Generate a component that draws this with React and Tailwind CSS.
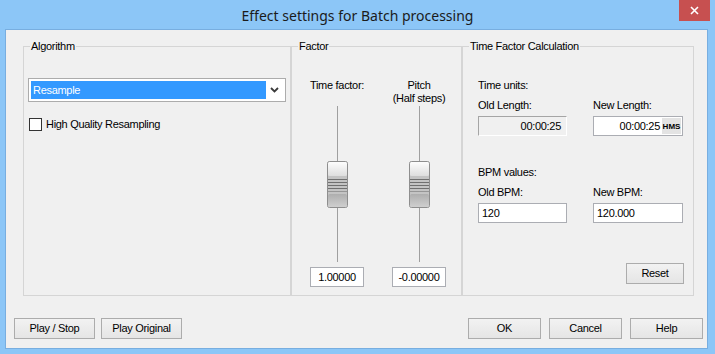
import React from "react";

function Btn({ children, className = "" }) {
  return (
    <div
      className={`h-[21px] border border-[#acacac] bg-linear-to-b from-[#f2f2f2] to-[#e5e5e5] flex items-center justify-center ${className}`}
    >
      {children}
    </div>
  );
}

function Thumb({ id }) {
  return (
    <svg width="21" height="47" viewBox="0 0 21 47" className="relative">
      <defs>
        <linearGradient id={`${id}t`} x1="0" y1="0" x2="0" y2="1">
          <stop offset="0" stopColor="#fdfdfd" />
          <stop offset="1" stopColor="#dedede" />
        </linearGradient>
        <linearGradient id={`${id}b`} x1="0" y1="0" x2="0" y2="1">
          <stop offset="0" stopColor="#aeaeae" />
          <stop offset="1" stopColor="#cfcfcf" />
        </linearGradient>
      </defs>
      <rect x="0.5" y="0.5" width="20" height="46" rx="2" fill="#c8c8c8" stroke="#8e8e8e" />
      <rect x="1" y="1" width="19" height="14" rx="1.5" fill={`url(#${id}t)`} />
      <rect x="1" y="15" width="19" height="18" fill="#c4c4c4" />
      <line x1="1" x2="20" y1="18.5" y2="18.5" stroke="#707070" />
      <line x1="1" x2="20" y1="21.5" y2="21.5" stroke="#707070" />
      <line x1="1" x2="20" y1="24.5" y2="24.5" stroke="#707070" />
      <line x1="1" x2="20" y1="27.5" y2="27.5" stroke="#707070" />
      <line x1="1" x2="20" y1="30.5" y2="30.5" stroke="#969696" />
      <rect x="1" y="33" width="19" height="13" rx="1.5" fill={`url(#${id}b)`} />
    </svg>
  );
}

function Slider({ label, value, id }) {
  return (
    <div className="flex flex-col items-center w-[54px]">
      <div className="h-[27px] leading-[13px] text-center whitespace-nowrap">{label}</div>
      <div className="relative w-[21px] h-[156px] flex items-center self-start ml-[17px]">
        <div className="absolute top-0 bottom-0 left-[10px] w-px bg-[#9f9f9f]" />
        <Thumb id={id} />
      </div>
      <div className="mt-[5px] w-[54px] h-[20px] border border-[#abadb3] bg-white text-center leading-[18px]">
        {value}
      </div>
    </div>
  );
}

function Group({ title, className = "", children }) {
  return (
    <fieldset className={`border border-[#d5d5d5] h-[256px] min-w-0 ${className}`}>
      <legend className="ml-[6px] px-[1px] leading-[13px]">{title}</legend>
      {children}
    </fieldset>
  );
}

export default function App() {
  return (
    <div className="w-[715px] h-[354px] bg-[#8cc6f7] flex flex-col font-['Liberation_Sans',Arial,sans-serif] text-[11px] text-black tracking-[-0.3px]">
      <div className="relative h-[29px] flex items-center justify-center pt-[2px]">
        <span className="font-['Noto_Sans',sans-serif] text-[14px] text-[#1b1b1b] tracking-normal">
          Effect settings for Batch processing
        </span>
        <div className="absolute top-0 right-[5px] w-[31px] h-[21px] bg-[#c75050] flex items-center justify-center">
          <svg width="9" height="9" viewBox="0 0 9 9">
            <path d="M1 1 L8 8 M8 1 L1 8" stroke="white" strokeWidth="1.6" />
          </svg>
        </div>
      </div>
      <div className="ml-[5px] w-[703px] h-[320px] border border-[#78aee0] bg-[#f0f0f0] flex flex-col">
        <div className="flex pl-[17px] pt-[10px]">
          <Group title="Algorithm" className="w-[268px]">
            <div className="pl-[4px] pt-[25px]">
              <div className="w-[258px] h-[24px] border border-[#acacac] bg-white flex items-center p-[2px]">
                <div className="flex-1 h-[18px] bg-[#3399ff] text-white pl-[2px] flex items-center">Resample</div>
                <div className="w-[17px] flex justify-center">
                  <svg width="9" height="6" viewBox="0 0 9 6">
                    <path d="M1 1 L4.5 4.5 L8 1" stroke="#3a3a3a" strokeWidth="1.8" fill="none" />
                  </svg>
                </div>
              </div>
              <div className="mt-[14px] ml-[1px] flex items-center">
                <div className="w-[13px] h-[13px] border border-[#333333] bg-white" />
                <span className="ml-[4px]">High Quality Resampling</span>
              </div>
            </div>
          </Group>
          <Group title="Factor" className="w-[171px]">
            <div className="pt-[26px] pl-[18px] grid grid-cols-[54px_54px] gap-x-[28px]">
              <Slider id="s1" label="Time factor:" value="1.00000" />
              <Slider
                id="s2"
                label={
                  <>
                    Pitch
                    <br />
                    (Half steps)
                  </>
                }
                value="-0.00000"
              />
            </div>
          </Group>
          <Group title="Time Factor Calculation" className="w-[232px]">
            <div className="pt-[26px] pl-[15px] leading-[13px]">
              <div>Time units:</div>
              <div className="mt-[7px] grid grid-cols-[89px_90px] gap-x-[26px] gap-y-[4px]">
                <div>Old Length:</div>
                <div>New Length:</div>
                <div className="h-[20px] bg-[#f0f0f0] border border-t-[#a5a5a5] border-l-[#a5a5a5] border-r-[#ffffff] border-b-[#ffffff] flex items-center justify-end pr-[5px]">
                  00:00:25
                </div>
                <div className="h-[20px] bg-white border border-[#abadb3] flex items-center justify-end pr-[1px]">
                  <span>00:00:25</span>
                  <span className="ml-[2px] w-[19px] h-[16px] bg-[#e3e3e3] text-[8px] font-bold tracking-normal flex items-center justify-center">
                    HMS
                  </span>
                </div>
              </div>
              <div className="mt-[30px]">BPM values:</div>
              <div className="mt-[7px] grid grid-cols-[89px_90px] gap-x-[26px] gap-y-[4px]">
                <div>Old BPM:</div>
                <div>New BPM:</div>
                <div className="h-[20px] bg-white border border-[#abadb3] flex items-center pl-[3px]">120</div>
                <div className="h-[20px] bg-white border border-[#abadb3] flex items-center pl-[3px]">120.000</div>
              </div>
              <div className="mt-[40px] w-[206px] flex justify-end">
                <Btn className="w-[58px]">Reset</Btn>
              </div>
            </div>
          </Group>
        </div>
        <div className="flex mt-[22px] pl-[8px] pr-[4px]">
          <Btn className="w-[81px]">Play / Stop</Btn>
          <Btn className="w-[81px] ml-[6px]">Play Original</Btn>
          <div className="flex-1" />
          <Btn className="w-[73px] border-[#3c96e6]">OK</Btn>
          <Btn className="w-[73px] ml-[8px]">Cancel</Btn>
          <Btn className="w-[73px] ml-[8px]">Help</Btn>
        </div>
      </div>
    </div>
  );
}
